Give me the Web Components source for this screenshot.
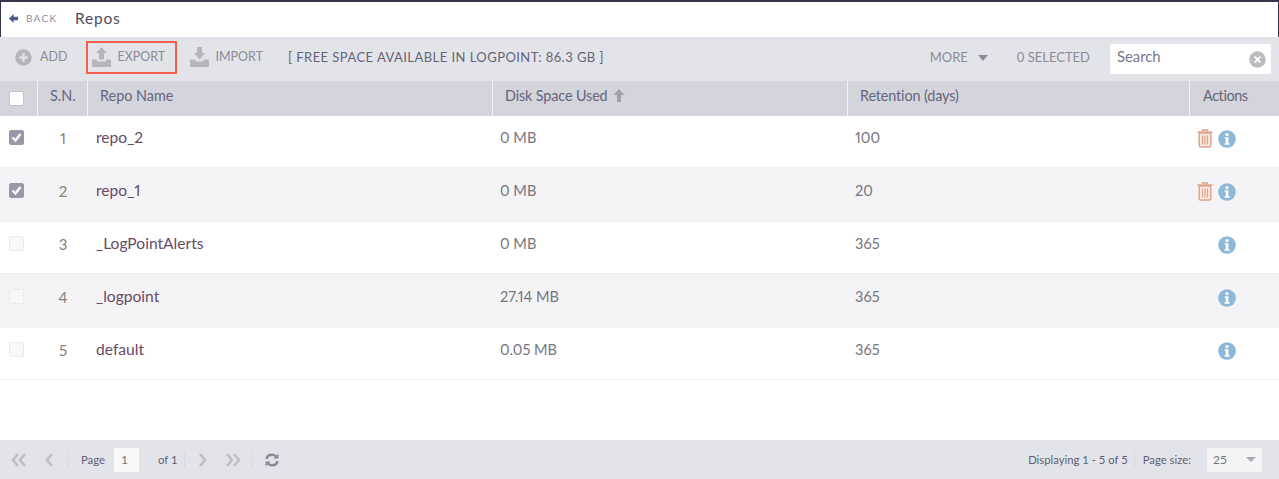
<!DOCTYPE html>
<html>
<head>
<meta charset="utf-8">
<title>Repos</title>
<style>
html, body { margin: 0; height: 100%; background: #fff; overflow: hidden; }
body { font-family: Lato, "Open Sans", sans-serif; font-size: 14px; color: #6b6a7c; }
</style>
</head>
<body>
<repo-page>
  <title-bar heading="Repos"></title-bar>
  <repo-toolbar></repo-toolbar>
  <repo-grid></repo-grid>
  <grid-pager></grid-pager>
</repo-page>

<script>
// --------- Icons ----------------------------------------------------------------
const ICONS = {
  add: `<svg width="17" height="17" viewBox="0 0 17 17"><circle cx="8.5" cy="8.5" r="8.2" fill="#b5b5bb"/><path d="M8.5 4.3v8.4M4.3 8.5h8.4" stroke="#e3e4ea" stroke-width="2.4"/></svg>`,
  export: `<svg width="19" height="20" viewBox="0 0 19 20"><path d="M9.5 0 15 6h-3v6.5H7V6H4z" fill="#b5b5bb"/><path d="M0 12.5h5v2h9v-2h5V20H0z" fill="#b5b5bb"/></svg>`,
  import: `<svg width="19" height="20" viewBox="0 0 19 20"><path d="M7 0h5v6h3l-5.500 6.500L4 6h3z" fill="#b5b5bb"/><path d="M0 12.500h5l1 2h7l1-2h5V20H0z" fill="#b5b5bb"/></svg>`,
  clear: `<svg width="17" height="17" viewBox="0 0 17 17"><circle cx="8.500" cy="8.500" r="8.300" fill="#bcbcc2"/><path d="M5.700 5.700l5.600 5.600M11.300 5.700l-5.600 5.600" stroke="#fff" stroke-width="1.800"/></svg>`,
  trash: `<svg width="16" height="19" viewBox="0 0 16 19"><path d="M5.500 2.500V1h5v1.500" fill="none" stroke="#e0a48c" stroke-width="1.400"/><path d="M.5 3.200h15" stroke="#e0a48c" stroke-width="1.800"/><rect x="2.200" y="4" width="11.600" height="14" rx="1.500" fill="#f8ebe5" stroke="#e0a48c" stroke-width="1.500"/><path d="M5.500 6.500v9M8 6.500v9M10.500 6.500v9" stroke="#e0a48c" stroke-width="1.300"/></svg>`,
  info: `<svg width="18" height="18" viewBox="0 0 18 18"><circle cx="9" cy="9" r="8.800" fill="#8db8d9"/><circle cx="9" cy="4.600" r="1.700" fill="#fff"/><path d="M6.700 7.300h3.700v6h1.200v1.500H6.500v-1.500h1.200V8.800h-1z" fill="#fff"/></svg>`,
  first: `<svg width="16" height="14" viewBox="0 0 16 14"><path d="M7 1 2 7l5 6M14 1 9 7l5 6" fill="none" stroke="#bebec4" stroke-width="2.600"/></svg>`,
  prev: `<svg width="10" height="14" viewBox="0 0 10 14"><path d="M8 1 3 7l5 6" fill="none" stroke="#bebec4" stroke-width="2.600"/></svg>`,
  next: `<svg width="10" height="14" viewBox="0 0 10 14"><path d="M2 1l5 6-5 6" fill="none" stroke="#bebec4" stroke-width="2.600"/></svg>`,
  last: `<svg width="16" height="14" viewBox="0 0 16 14"><path d="M2 1l5 6-5 6M9 1l5 6-5 6" fill="none" stroke="#bebec4" stroke-width="2.600"/></svg>`,
  refresh: `<svg width="14" height="14" viewBox="0 0 14 14"><path d="M1.500 6C2 3.200 4.200 1.700 7 1.700c1.700 0 3 .6 4 1.700" fill="none" stroke="#8a8a95" stroke-width="2.400"/><path d="M13.500 .5v5h-5z" fill="#8a8a95"/><path d="M12.500 8c-.5 2.800-2.700 4.300-5.500 4.300-1.700 0-3-.6-4-1.700" fill="none" stroke="#8a8a95" stroke-width="2.400"/><path d="M.5 13.500v-5h5z" fill="#8a8a95"/></svg>`
};

// --------- Page shell ----------------------------------------------------------------
class RepoPage extends HTMLElement {
  connectedCallback() {
    this.attachShadow({ mode: 'open' }).innerHTML = `<style>
      :host { display: flex; flex-direction: column; height: 479px; box-sizing: border-box; border-top: 2px solid #34344a; }
    </style><slot></slot>`;
  }
}
customElements.define('repo-page', RepoPage);

class TitleBar extends HTMLElement {
  connectedCallback() {
    this.attachShadow({ mode: 'open' }).innerHTML = `<style>
      :host { display: flex; align-items: center; height: 35px; flex: none; padding: 0 0 3px 8px; box-sizing: border-box; border-left: 1px solid #34344a; border-right: 1px solid #34344a; }
      .back { display: flex; align-items: center; gap: 8px; font-size: 10px; letter-spacing: 1.25px; color: #8d8da0; width: 66px; }
      h1 { margin: 0; font-size: 15.5px; font-weight: 400; letter-spacing: .8px; color: #4d4c5e; }
      svg { display: block; }
    </style>
    <span class="back"><svg width="9" height="9" viewBox="0 0 9 9"><path d="M0 4.500 4.500 0v2.800H9v3.400H4.500V9z" fill="#4e5a8a"/></svg>BACK</span>
    <h1>${this.getAttribute('heading')}</h1>`;
  }
}
customElements.define('title-bar', TitleBar);

// --------- Toolbar ----------------------------------------------------------------
class ToolButton extends HTMLElement {
  connectedCallback() {
    this.attachShadow({ mode: 'open' }).innerHTML = `<style>
      :host { display: flex; align-items: center; gap: var(--gap, 7px); font-size: 12.5px; color: #8b8a96; height: 33px; box-sizing: border-box; }
      :host([boxed]) { border: 2px solid #f4604c; }
      svg { display: block; margin-bottom: var(--lift, 0); }
      .label { padding-bottom: 2px; }
    </style>${ICONS[this.getAttribute('icon')]}<span class="label"><slot></slot></span>`;
  }
}
customElements.define('tool-button', ToolButton);

class RepoToolbar extends HTMLElement {
  connectedCallback() {
    this.attachShadow({ mode: 'open' }).innerHTML = `<style>
      :host { display: flex; align-items: center; height: 44px; flex: none; background: #e3e4ea; padding: 0 8px 3px 15px; box-sizing: border-box; font-size: 13px; color: #8b8a96; }
      .add { margin-right: 19px; --gap: 8px; }
      .export { width: 91px; padding-left: 4px; margin-right: 13px; --gap: 6px; --lift: 2px; }
      .import { margin-right: 25px; --gap: 6px; --lift: 2px; }
      .free { color: #656477; letter-spacing: .45px; flex: 1; padding-bottom: 2px; }
      .more { display: flex; align-items: center; gap: 10px; margin-right: 29px; padding-bottom: 2px; }
      .tri { width: 0; height: 0; border: 5px solid transparent; border-top: 6px solid #8b8a96; border-bottom: 0; margin-top: 2px; }
      .selected { margin-right: 20px; padding-bottom: 2px; }
      .search { display: flex; align-items: center; justify-content: space-between; width: 161px; height: 30px; margin-top: 3px; background: #fff; border-radius: 2px; padding: 0 5px 0 7px; box-sizing: border-box; font-size: 14.8px; color: #77768a; }
      .search span { margin-top: -6px; }
      .search svg { display: block; }
    </style>
    <tool-button class="add" icon="add">ADD</tool-button>
    <tool-button class="export" icon="export" boxed>EXPORT</tool-button>
    <tool-button class="import" icon="import">IMPORT</tool-button>
    <span class="free">[ FREE SPACE AVAILABLE IN LOGPOINT: 86.3 GB ]</span>
    <span class="more">MORE <i class="tri"></i></span>
    <span class="selected">0 SELECTED</span>
    <div class="search"><span>Search</span>${ICONS.clear}</div>`;
  }
}
customElements.define('repo-toolbar', RepoToolbar);

// --------- Grid ----------------------------------------------------------------
const COLUMNS = '37px 50px 405px 355px 342px 1fr';

class RepoCheck extends HTMLElement {
  connectedCallback() {
    const checked = this.hasAttribute('checked');
    this.attachShadow({ mode: 'open' }).innerHTML = `<style>
      :host { display: block; width: 15px; height: 15px; box-sizing: border-box; border-radius: 2px; background: #fff; border: 1px solid #c4c4cc; }
      :host([checked]) { background: #9c96ac; border-color: #9c96ac; }
      :host([disabled]) { background: #f7f8f7; border-color: #ebebee; }
      svg { display: block; }
    </style>${checked ? '<svg width="13" height="13" viewBox="0 0 13 13"><path d="M2.500 6.500l3 3 5-6.500" fill="none" stroke="#fff" stroke-width="2.400"/></svg>' : ''}`;
  }
}
customElements.define('repo-check', RepoCheck);

class RepoRow extends HTMLElement {
  connectedCallback() {
    const a = n => this.getAttribute(n);
    const state = a('state');
    const check = state === 'checked' ? '<repo-check checked></repo-check>' : '<repo-check disabled></repo-check>';
    this.attachShadow({ mode: 'open' }).innerHTML = `<style>
      :host { display: grid; grid-template-columns: ${COLUMNS}; align-items: center; box-sizing: border-box; height: var(--h, 52px); border-bottom: 1px solid #f0f0f3; font-size: 14.6px; color: #77767f; padding-bottom: 8px; font-variant-numeric: proportional-nums; }
      :host([alt]) { background: #f4f4f7; }
      .chk { padding-left: 9px; }
      .sn { text-align: center; color: #8b7f78; font-size: 15px; padding-left: 2px; }
      .name { color: #684a66; padding: 0 0 2px 9px; font-size: 15.6px; }
      .cell { padding-left: 8px; }
      .act { display: flex; align-items: center; padding-left: 8px; gap: 5px; margin-top: 2px; }
      .act .spacer { width: 16px; }
      svg { display: block; }
    </style>
    <div class="chk">${check}</div>
    <div class="sn">${a('sn')}</div>
    <div class="name">${a('name')}</div>
    <div class="cell">${a('used')}</div>
    <div class="cell">${a('days')}</div>
    <div class="act">${state === 'checked' ? ICONS.trash : '<span class="spacer"></span>'}${ICONS.info}</div>`;
  }
}
customElements.define('repo-row', RepoRow);

class RepoGrid extends HTMLElement {
  connectedCallback() {
    this.attachShadow({ mode: 'open' }).innerHTML = `<style>
      :host { display: block; flex: 1; }
      .head { display: grid; grid-template-columns: ${COLUMNS}; height: 35px; background: #d3d4dc; font-size: 14.4px; color: #66657a; }
      .head > div { display: flex; align-items: center; padding-left: 12px; border-left: 1px solid #f3f3f6; box-sizing: border-box; padding-bottom: 6px; }
      .head > div:first-child { border: 0; padding-left: 9px; padding-bottom: 0; }
      .head > .tight { padding-left: 12px; letter-spacing: -.13px; }
      .arrow { margin-left: 5px; display: block; }
    </style>
    <div class="head">
      <div><repo-check></repo-check></div>
      <div>S.N.</div>
      <div>Repo Name</div>
      <div class="tight">Disk Space Used<svg class="arrow" width="12" height="13" viewBox="0 0 12 13"><path d="M6 0l5.500 6H8v7H4V6H.5z" fill="#a0a0ab"/></svg></div>
      <div class="tight">Retention (days)</div>
      <div class="tight" style="padding-left:13px;letter-spacing:-.4px">Actions</div>
    </div>
    <repo-row state="checked" sn="1" name="repo_2" used="0 MB" days="100"></repo-row>
    <repo-row state="checked" alt sn="2" name="repo_1" used="0 MB" days="20" style="--h:54px"></repo-row>
    <repo-row sn="3" name="_LogPointAlerts" used="0 MB" days="365"></repo-row>
    <repo-row alt sn="4" name="_logpoint" used="27.14 MB" days="365" style="--h:54px"></repo-row>
    <repo-row sn="5" name="default" used="0.05 MB" days="365"></repo-row>`;
  }
}
customElements.define('repo-grid', RepoGrid);

// --------- Pager ----------------------------------------------------------------
class GridPager extends HTMLElement {
  connectedCallback() {
    this.attachShadow({ mode: 'open' }).innerHTML = `<style>
      :host { display: flex; align-items: center; height: 39px; flex: none; background: #e3e4ea; padding: 0 17px 0 11px; box-sizing: border-box; font-size: 11.3px; color: #5f5e72; }
      .sep { width: 0; height: 14px; border-left: 1px dotted #cfcfd6; }
      .page { width: 25px; height: 24px; background: #f7f8f7; font-size: 12px; line-height: 24px; padding-left: 7px; box-sizing: border-box; color: #77767f; }
      .grow { flex: 1; }
      .size { display: flex; align-items: center; justify-content: space-between; width: 55px; height: 24px; background: #f3f4f3; padding: 0 6px 0 6px; box-sizing: border-box; font-size: 12px; color: #77767f; }
      .tri { width: 0; height: 0; border: 5px solid transparent; border-top: 5px solid #a9a9b2; border-bottom: 0; }
      svg { display: block; }
    </style>
    ${ICONS.first}
    <span style="width:17px"></span>${ICONS.prev}
    <span style="width:14px"></span><i class="sep"></i>
    <span style="width:12px"></span><span>Page</span>
    <span style="width:9px"></span><span class="page">1</span>
    <span style="width:19px"></span><span>of 1</span>
    <span style="width:7px"></span><i class="sep"></i>
    <span style="width:13px"></span>${ICONS.next}
    <span style="width:17px"></span>${ICONS.last}
    <span style="width:11px"></span><i class="sep"></i>
    <span style="width:12px"></span>${ICONS.refresh}
    <span class="grow"></span>
    <span>Displaying 1 - 5 of 5</span>
    <span style="width:6px"></span><i class="sep"></i>
    <span style="width:8px"></span><span>Page size:</span>
    <span style="width:16px"></span>
    <div class="size"><span>25</span><i class="tri"></i></div>`;
  }
}
customElements.define('grid-pager', GridPager);
</script>
</body>
</html>
